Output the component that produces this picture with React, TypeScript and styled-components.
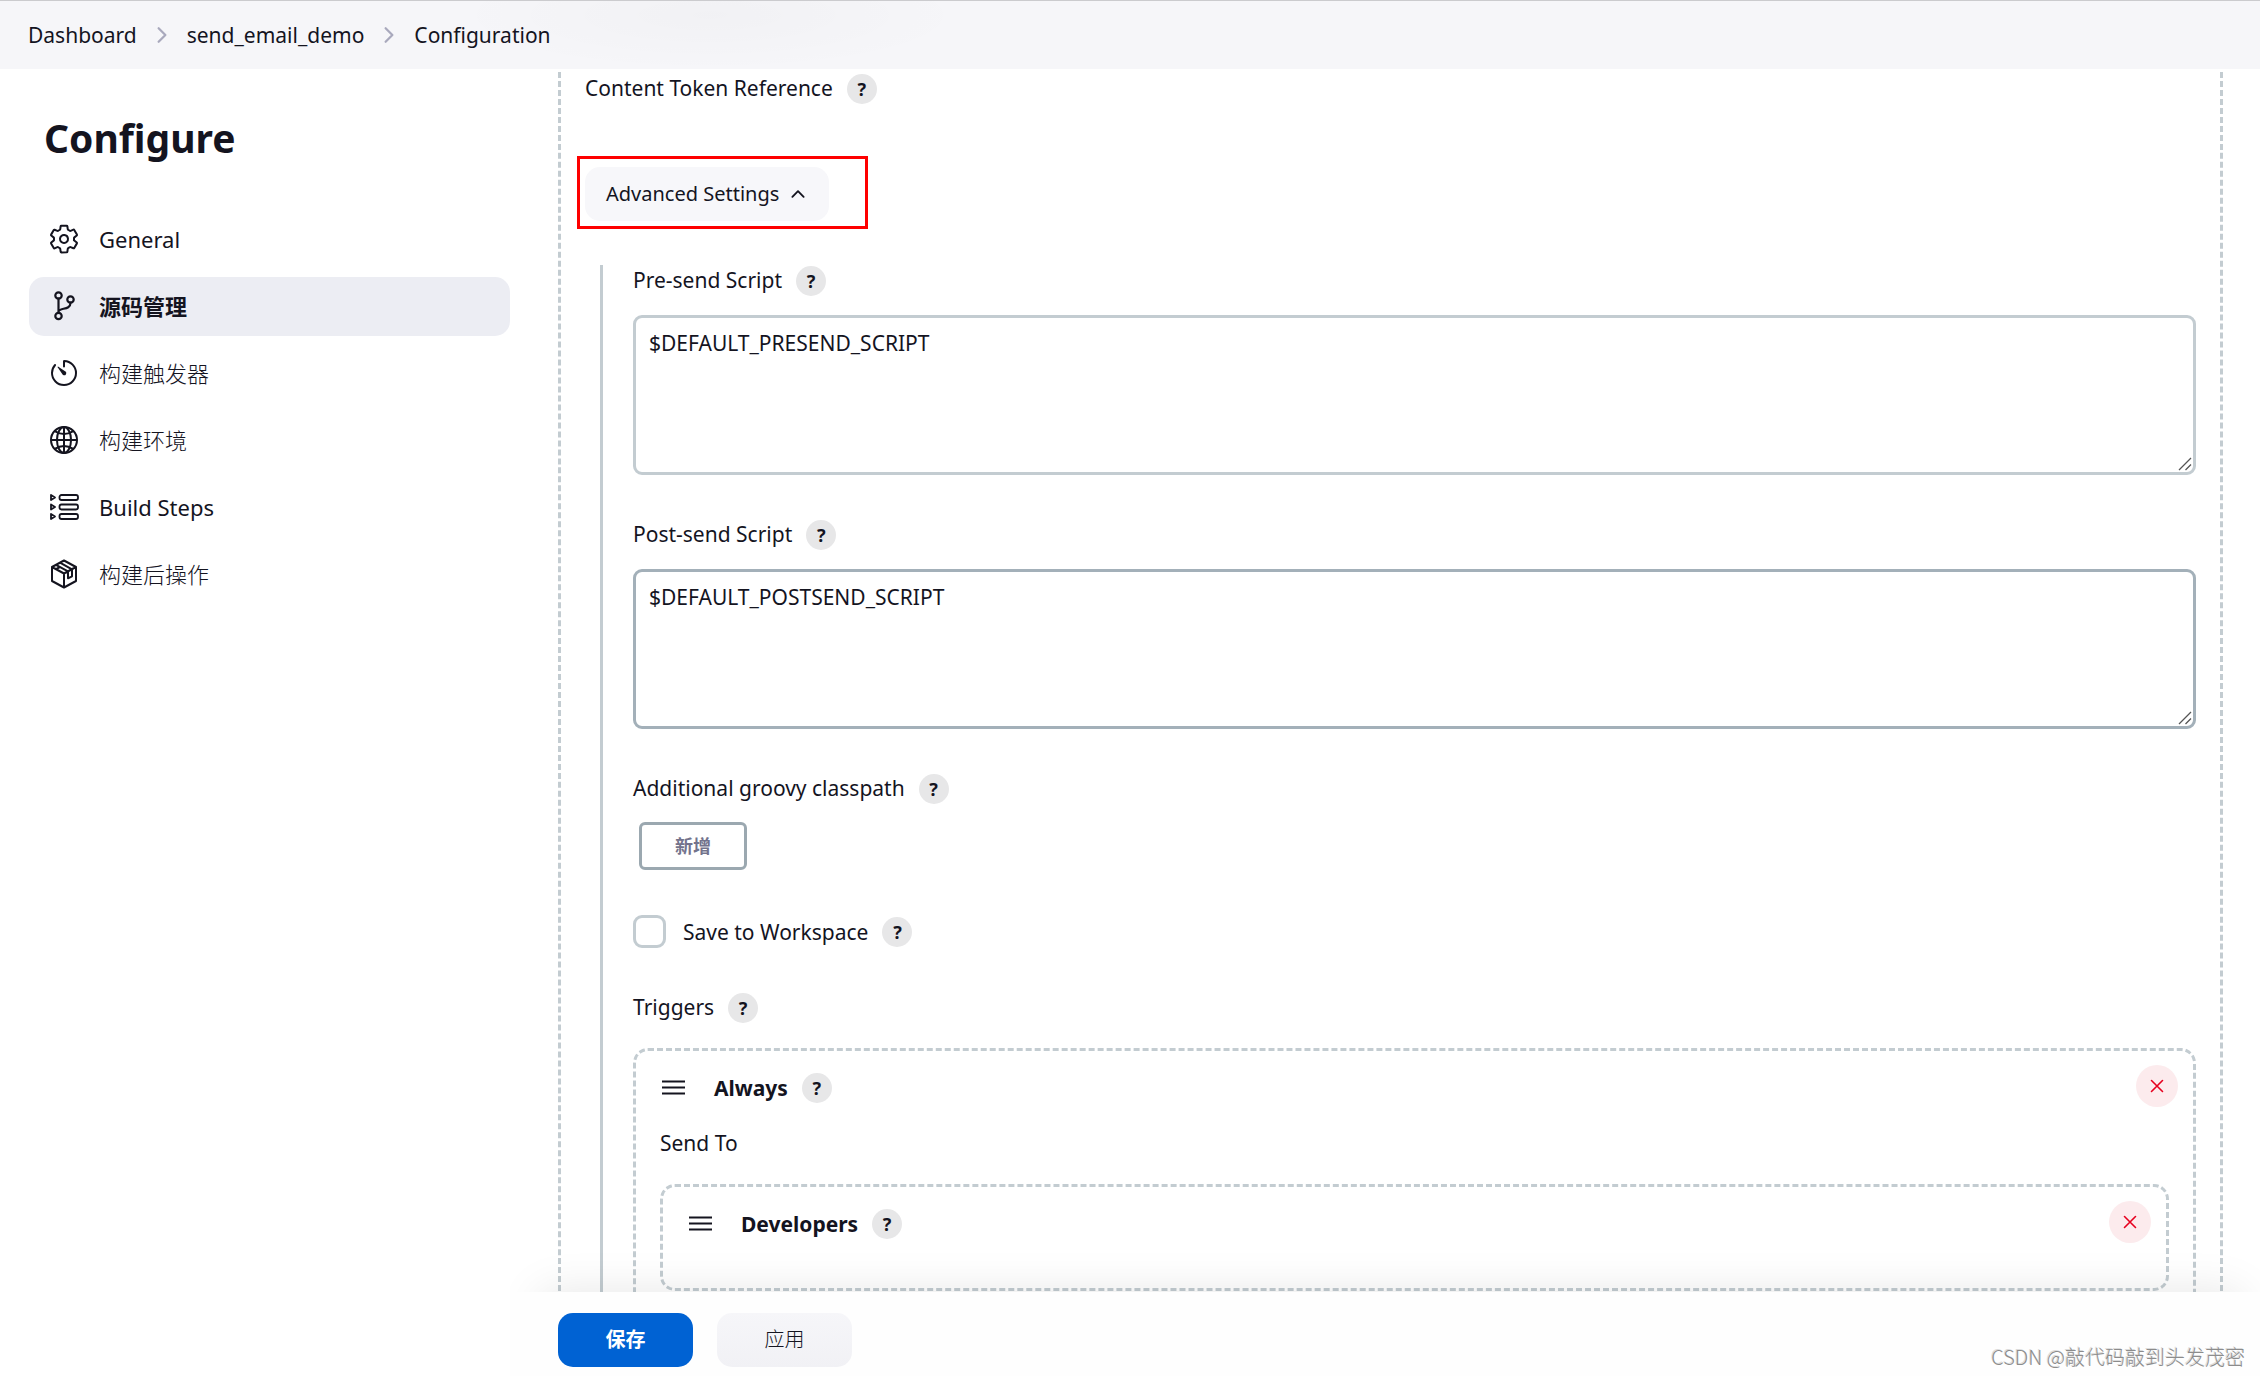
import React, { useState } from 'react';
import styled, { createGlobalStyle } from 'styled-components';
import { IoChevronForward, IoChevronUp, IoGlobeOutline, IoSettingsOutline, IoTimerOutline } from 'react-icons/io5';

const ink = '#14141f';
const line = '#c3ccd1';

const GlobalStyle = createGlobalStyle`
  *, *::before, *::after { box-sizing: border-box; }
  body {
    margin: 0;
    background: #fff;
    color: ${ink};
    font: 400 21px/30px "Noto Sans", "Noto Sans CJK SC", sans-serif;
  }
  button, input, textarea { font: inherit; color: inherit; }
`;

const Page = styled.div`
  display: flex;
  flex-direction: column;
  height: 100vh;
  overflow: hidden;
`;

const Breadcrumbs = styled.nav`
  display: flex;
  align-items: center;
  gap: 13px;
  flex: none;
  height: 69px;
  padding: 0 28px;
  border-top: 1px solid #cbcbce;
  background:
    radial-gradient(ellipse 260px 56px at 710px 14px, rgba(0, 0, 0, 0.02), transparent),
    #f6f6f9;
`;

const Crumb = styled.a`
  color: ${ink};
  text-decoration: none;
`;

const CrumbArrow = styled(IoChevronForward)`
  width: 24px;
  height: 24px;
  color: #a9a9bd;
`;

const Body = styled.div`
  display: grid;
  grid-template-columns: 510px minmax(0, 1fr);
  flex: 1;
  min-height: 0;
`;

const Sidebar = styled.aside`
  padding: 39px 0 0 29px;
`;

const Title = styled.h1`
  margin: 0 0 42px 15px;
  font-size: 39px;
  line-height: 60px;
  font-weight: 700;
`;

const Tasks = styled.nav`
  display: flex;
  flex-direction: column;
  gap: 8px;
`;

const Task = styled.a<{ $active?: boolean }>`
  display: flex;
  align-items: center;
  gap: 19px;
  height: 59px;
  padding: 0 19px 2px;
  border-radius: 15px;
  background: ${(p) => (p.$active ? '#ecedf3' : 'transparent')};
  color: ${ink};
  font-size: 22px;
  font-weight: ${(p) => (p.$active ? 700 : 400)};
  text-decoration: none;

  &:lang(zh) {
    font-weight: ${(p) => (p.$active ? 700 : 300)};
  }

  svg {
    width: 32px;
    height: 32px;
    flex: none;
  }
`;

const Workspace = styled.main`
  display: flex;
  flex-direction: column;
  min-width: 0;
  min-height: 0;
`;

const Viewport = styled.div`
  position: relative;
  flex: 1;
  min-height: 0;
  overflow: hidden;
  padding: 3px 37px 0 48px;
`;

const FooterShadow = styled.div`
  position: absolute;
  top: 100%;
  left: 30px;
  right: 18px;
  height: 84px;
  box-shadow: 0 0 45px rgba(0, 0, 0, 0.1);
`;

const Publisher = styled.section`
  padding: 2px 24px 0;
  border: dashed ${line};
  border-width: 0 3px;
`;

const LabelRow = styled.div`
  display: flex;
  align-items: flex-start;
  gap: 14px;
  height: 30px;
  line-height: 28px;
`;

const Help = styled.button`
  width: 30px;
  height: 30px;
  padding: 0;
  border: 0;
  border-radius: 50%;
  background: #e7e7e8;
  font-size: 18px;
  line-height: 30px;
  font-weight: 700;
`;

const Highlight = styled.div`
  width: 291px;
  margin: 52px 0 36px -8px;
  padding: 8px 5px 5px;
  border: 3px solid #fe0000;
`;

const AdvancedButton = styled.button`
  display: flex;
  align-items: center;
  gap: 9px;
  height: 54px;
  padding: 0 21px;
  border: 0;
  border-radius: 15px;
  background: #f7f7fa;
  font-size: 20px;

  svg {
    width: 20px;
    height: 20px;
  }
`;

const Advanced = styled.div`
  display: flex;
  flex-direction: column;
  gap: 45px;
  margin-left: 15px;
  padding: 1px 0 0 30px;
  border-left: 3px solid ${line};
`;

const Field = styled.div<{ $gap?: number }>`
  display: flex;
  flex-direction: column;
  gap: ${(p) => p.$gap ?? 19}px;
`;

const ScriptBox = styled.div`
  position: relative;
`;

const Script = styled.textarea<{ $hover?: boolean }>`
  display: block;
  width: 100%;
  height: 160px;
  padding: 10px 13px;
  border: 3px solid ${(p) => (p.$hover ? '#a3b0b9' : line)};
  border-radius: 9px;
  background: #fff;
  outline: 0;
  resize: vertical;

  &::-webkit-resizer { background: transparent; }
`;

const Grip = styled.svg`
  position: absolute;
  right: 4px;
  bottom: 4px;
  pointer-events: none;
`;

const AddButton = styled.button`
  align-self: flex-start;
  width: 108px;
  height: 48px;
  margin-left: 6px;
  border: 3px solid #9ba8b0;
  border-radius: 6px;
  background: #fff;
  color: #73738c;
  font-size: 18px;
  line-height: 24px;
  font-weight: 700;
`;

const CheckRow = styled.div`
  display: flex;
  align-items: center;
  gap: 14px;
  height: 33px;
`;

const CheckLabel = styled.label`
  display: flex;
  align-items: center;
  gap: 17px;
`;

const Checkbox = styled.input`
  appearance: none;
  width: 33px;
  height: 33px;
  margin: 0;
  border: 3px solid ${line};
  border-radius: 9px;

  &:checked { background: #0062d3; }
`;

const Chunk = styled.div`
  padding: 14px 15px 42px 24px;
  border: 3px dashed ${line};
  border-radius: 15px;
`;

const ChunkHead = styled.div`
  display: flex;
  align-items: center;
  gap: 14px;
  height: 45px;
`;

const Handle = styled.span`
  display: flex;
  margin: 0 15px 0 2px;
`;

const ChunkTitle = styled.span`
  font-weight: 700;
`;

const Remove = styled.button`
  display: grid;
  place-items: center;
  align-self: flex-start;
  width: 42px;
  height: 42px;
  margin-left: auto;
  padding: 0;
  border: 0;
  border-radius: 50%;
  background: #fcebed;
  color: #e6001f;
`;

const SendTo = styled.div`
  margin: 18px 0 26px;
`;

const ChunkBody = styled.div`
  padding-right: 9px;
`;

const Footer = styled.footer`
  display: flex;
  align-items: flex-start;
  gap: 24px;
  flex: none;
  height: 84px;
  padding: 21px 15px 0 48px;
  background: #fefefe;
`;

const Action = styled.button<{ $primary?: boolean }>`
  width: 135px;
  height: 54px;
  padding: 0;
  border: 0;
  border-radius: 15px;
  background: ${(p) => (p.$primary ? '#0062d3' : 'linear-gradient(#f6f6f9, #f1f1f5)')};
  color: ${(p) => (p.$primary ? '#fff' : ink)};
  font-size: 20px;
  font-weight: ${(p) => (p.$primary ? 700 : 300)};
`;

const Watermark = styled.span`
  align-self: flex-end;
  margin: 0 0 4px auto;
  color: #8c8c8c;
  font-family: "Noto Sans CJK SC", sans-serif;
  font-size: 20px;
  font-weight: 300;
  text-shadow: -1px -1px 0 #dcdcdc;
`;

const BranchIcon = () => (
  <svg viewBox="0 0 32 32" fill="none" stroke="currentColor" strokeWidth="2.2" strokeLinecap="round">
    <circle cx="10.5" cy="5.5" r="3.2" />
    <circle cx="10.5" cy="26" r="3.2" />
    <circle cx="22.5" cy="9.5" r="3.2" />
    <path d="M10.5 8.7v14M22.5 12.7c0 8.5-12 4-12 9.5" />
  </svg>
);

const StepsIcon = () => (
  <svg viewBox="0 0 32 32" fill="none" stroke="currentColor" strokeWidth="1.8" strokeLinejoin="round">
    {[6.5, 16, 25.5].map((y) => (
      <g key={y}>
        <path d={`M3 ${y - 2.5}l4 2.5-4 2.5z`} />
        <rect x="11.5" y={y - 2.5} width="18.5" height="5" rx="2" />
      </g>
    ))}
  </svg>
);

const PackageIcon = () => (
  <svg viewBox="0 0 32 32" fill="none" stroke="currentColor" strokeWidth="2" strokeLinejoin="round" strokeLinecap="round">
    <path d="M16 2.5L28 9v14l-12 6.5L4 23V9zM4 9l12 6.5L28 9M16 15.500v14M8 6.800l12 6.500v7l4-2v-7L12 4.700M8 11.200l4-2.200" />
  </svg>
);

const HandleIcon = () => (
  <svg width="23" height="15" viewBox="0 0 23 15" stroke="currentColor" strokeWidth="2">
    <path d="M0 1.5h23M0 7.5h23M0 13.5h23" />
  </svg>
);

const CrossIcon = () => (
  <svg width="14" height="14" viewBox="0 0 14 14" stroke="currentColor" strokeWidth="1.6" strokeLinecap="round">
    <path d="M1.5 1.5l11 11M12.5 1.5l-11 11" />
  </svg>
);

const tasks = [
  { label: 'General', lang: 'en', icon: <IoSettingsOutline /> },
  { label: '源码管理', lang: 'zh', icon: <BranchIcon />, active: true },
  { label: '构建触发器', lang: 'zh', icon: <IoTimerOutline /> },
  { label: '构建环境', lang: 'zh', icon: <IoGlobeOutline /> },
  { label: 'Build Steps', lang: 'en', icon: <StepsIcon /> },
  { label: '构建后操作', lang: 'zh', icon: <PackageIcon /> },
];

const HelpButton = ({ topic }: { topic: string }) => (
  <Help type="button" aria-label={`Help for ${topic}`}>?</Help>
);

const ScriptField = ({ id, label, value, hover }: { id: string; label: string; value: string; hover?: boolean }) => (
  <Field>
    <LabelRow>
      <label htmlFor={id}>{label}</label>
      <HelpButton topic={label} />
    </LabelRow>
    <ScriptBox>
      <Script id={id} defaultValue={value} $hover={hover} spellCheck={false} />
      <Grip width="14" height="14" viewBox="0 0 14 14" stroke="#555" strokeWidth="1.3">
        <path d="M1 13L13 1M7.5 13L13 7.5" />
      </Grip>
    </ScriptBox>
  </Field>
);

const ChunkHeader = ({ title }: { title: string }) => (
  <ChunkHead>
    <Handle><HandleIcon /></Handle>
    <ChunkTitle>{title}</ChunkTitle>
    <HelpButton topic={title} />
    <Remove type="button" aria-label={`Remove ${title}`}><CrossIcon /></Remove>
  </ChunkHead>
);

export default function App() {
  const [open, setOpen] = useState(true);
  return (
    <>
      <GlobalStyle />
      <Page>
        <Breadcrumbs aria-label="Breadcrumb">
          <Crumb href="#dashboard">Dashboard</Crumb>
          <CrumbArrow />
          <Crumb href="#job">send_email_demo</Crumb>
          <CrumbArrow />
          <Crumb href="#configure">Configuration</Crumb>
        </Breadcrumbs>
        <Body>
          <Sidebar>
            <Title>Configure</Title>
            <Tasks aria-label="Sections">
              {tasks.map((t) => (
                <Task key={t.label} href="#section" lang={t.lang} $active={t.active}>
                  {t.icon}
                  {t.label}
                </Task>
              ))}
            </Tasks>
          </Sidebar>
          <Workspace>
            <Viewport>
              <Publisher>
                <LabelRow>
                  <span>Content Token Reference</span>
                  <HelpButton topic="Content Token Reference" />
                </LabelRow>
                <Highlight>
                  <AdvancedButton type="button" aria-expanded={open} onClick={() => setOpen(!open)}>
                    Advanced Settings
                    <IoChevronUp />
                  </AdvancedButton>
                </Highlight>
                {open && (
                  <Advanced>
                    <ScriptField id="presend" label="Pre-send Script" value="$DEFAULT_PRESEND_SCRIPT" />
                    <ScriptField id="postsend" label="Post-send Script" value="$DEFAULT_POSTSEND_SCRIPT" hover />
                    <Field $gap={18}>
                      <LabelRow>
                        <span>Additional groovy classpath</span>
                        <HelpButton topic="Additional groovy classpath" />
                      </LabelRow>
                      <AddButton type="button">新增</AddButton>
                    </Field>
                    <CheckRow>
                      <CheckLabel>
                        <Checkbox type="checkbox" />
                        Save to Workspace
                      </CheckLabel>
                      <HelpButton topic="Save to Workspace" />
                    </CheckRow>
                    <Field $gap={25}>
                      <LabelRow>
                        <span>Triggers</span>
                        <HelpButton topic="Triggers" />
                      </LabelRow>
                      <Chunk>
                        <ChunkHeader title="Always" />
                        <ChunkBody>
                          <SendTo>Send To</SendTo>
                          <Chunk>
                            <ChunkHeader title="Developers" />
                          </Chunk>
                        </ChunkBody>
                      </Chunk>
                    </Field>
                  </Advanced>
                )}
              </Publisher>
              <FooterShadow />
            </Viewport>
            <Footer>
              <Action type="button" $primary>保存</Action>
              <Action type="button">应用</Action>
              <Watermark>CSDN @敲代码敲到头发茂密</Watermark>
            </Footer>
          </Workspace>
        </Body>
      </Page>
    </>
  );
}
